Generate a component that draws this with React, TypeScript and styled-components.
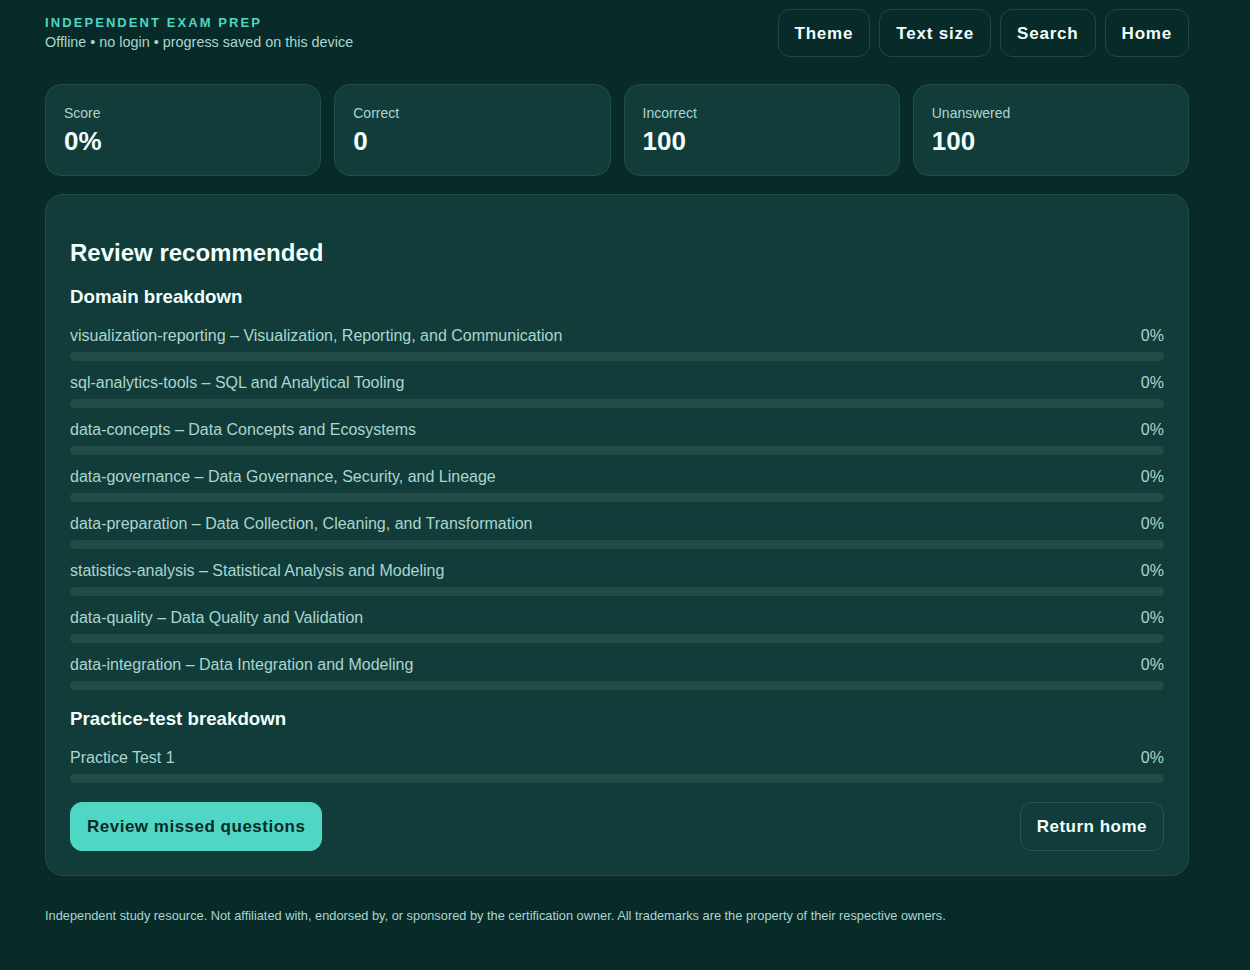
import React from 'react';
import styled, { createGlobalStyle } from 'styled-components';

const GlobalStyle = createGlobalStyle`
    * { box-sizing: border-box; }
    body {
        margin: 0;
        background: #082a29;
        font-family: "Liberation Sans", Arial, sans-serif;
        color: #eafaf7;
    }
`;

const Page = styled.div`
    width: 1144px;
    margin-left: 45px;
    min-height: 970px;
`;

const Header = styled.header`
    display: flex;
    align-items: center;
    justify-content: space-between;
    padding-top: 9px;
`;

const Brand = styled.div`
    display: flex;
    flex-direction: column;
    gap: 3px;
    margin-top: -1px;
`;

const Kicker = styled.div`
    font-size: 13px;
    line-height: 16px;
    font-weight: 700;
    letter-spacing: 0.16em;
    color: #4fd6c4;
`;

const Tagline = styled.div`
    font-size: 14.4px;
    line-height: 17px;
    color: #a9d6cf;
`;

const Nav = styled.nav`
    display: flex;
    gap: 9px;
`;

const NavButton = styled.button`
    height: 48px;
    padding: 2px 16px 0;
    border-radius: 12px;
    border: 1px solid #1f4845;
    background: transparent;
    color: #f1fffd;
    font-family: inherit;
    font-size: 17px;
    font-weight: 700;
    letter-spacing: 0.8px;
    cursor: pointer;
`;

const Stats = styled.section`
    display: grid;
    grid-template-columns: repeat(4, 1fr);
    gap: 13px;
    margin-top: 27px;
`;

const StatCard = styled.div`
    background: #123c39;
    border: 1px solid #224e4a;
    border-radius: 16px;
    padding: 20px 18px 19px;
`;

const StatLabel = styled.div`
    font-size: 14px;
    line-height: 17px;
    color: #a9d6cf;
    margin-bottom: 4px;
`;

const StatValue = styled.div`
    font-size: 26px;
    line-height: 30px;
    font-weight: 700;
    color: #f1fffd;
`;

const Panel = styled.section`
    margin-top: 18px;
    background: #123c39;
    border: 1px solid #224e4a;
    border-radius: 18px;
    padding: 43px 24px 24px;
    display: flex;
    flex-direction: column;
    gap: 18px;
`;

const Title = styled.h2`
    margin: 0 0 1px;
    font-size: 24px;
    line-height: 29px;
    font-weight: 700;
    color: #f1fffd;
`;

const SectionTitle = styled.h3`
    margin: 0;
    font-size: 18.72px;
    line-height: 22px;
    font-weight: 700;
    color: #f1fffd;
`;

const RowList = styled.div`
    display: flex;
    flex-direction: column;
    gap: 12px;
`;

const Row = styled.div`
    display: flex;
    flex-direction: column;
    gap: 7px;
`;

const RowHead = styled.div`
    display: flex;
    justify-content: space-between;
    font-size: 16px;
    line-height: 19px;
    color: #a9d6cf;
`;

const Track = styled.div`
    height: 9px;
    border-radius: 999px;
    background: #234b47;
    overflow: hidden;
`;

const Fill = styled.div`
    height: 100%;
    background: #4fd6c4;
`;

const Actions = styled.div`
    display: flex;
    justify-content: space-between;
    margin-top: 1px;
`;

const ActionButton = styled.button<{ $primary?: boolean }>`
    height: 49px;
    padding: 0 16px;
    border-radius: 12px;
    font-family: inherit;
    font-size: 17px;
    font-weight: 700;
    letter-spacing: 0.5px;
    cursor: pointer;
    border: 1px solid ${p => (p.$primary ? '#4fd6c4' : '#275450')};
    background: ${p => (p.$primary ? '#4fd6c4' : 'transparent')};
    color: ${p => (p.$primary ? '#0a2a27' : '#f1fffd')};
`;

const Footer = styled.footer`
    margin-top: 32px;
    font-size: 12.8px;
    line-height: 15px;
    color: #a9d6cf;
`;

type Breakdown = { label: string; pct: number };

const domains: Breakdown[] = [
    { label: 'visualization-reporting – Visualization, Reporting, and Communication', pct: 0 },
    { label: 'sql-analytics-tools – SQL and Analytical Tooling', pct: 0 },
    { label: 'data-concepts – Data Concepts and Ecosystems', pct: 0 },
    { label: 'data-governance – Data Governance, Security, and Lineage', pct: 0 },
    { label: 'data-preparation – Data Collection, Cleaning, and Transformation', pct: 0 },
    { label: 'statistics-analysis – Statistical Analysis and Modeling', pct: 0 },
    { label: 'data-quality – Data Quality and Validation', pct: 0 },
    { label: 'data-integration – Data Integration and Modeling', pct: 0 },
];

const tests: Breakdown[] = [{ label: 'Practice Test 1', pct: 0 }];

const stats = [
    { label: 'Score', value: '0%' },
    { label: 'Correct', value: '0' },
    { label: 'Incorrect', value: '100' },
    { label: 'Unanswered', value: '100' },
];

function BreakdownList({ items }: { items: Breakdown[] }) {
    return (
        <RowList>
            {items.map(item => (
                <Row key={item.label}>
                    <RowHead>
                        <span>{item.label}</span>
                        <span>{item.pct}%</span>
                    </RowHead>
                    <Track>
                        <Fill style={{ width: `${item.pct}%` }} />
                    </Track>
                </Row>
            ))}
        </RowList>
    );
}

export default function App() {
    return (
        <>
            <GlobalStyle />
            <Page>
                <Header>
                    <Brand>
                        <Kicker>INDEPENDENT EXAM PREP</Kicker>
                        <Tagline>Offline • no login • progress saved on this device</Tagline>
                    </Brand>
                    <Nav>
                        <NavButton>Theme</NavButton>
                        <NavButton>Text size</NavButton>
                        <NavButton>Search</NavButton>
                        <NavButton>Home</NavButton>
                    </Nav>
                </Header>

                <Stats>
                    {stats.map(s => (
                        <StatCard key={s.label}>
                            <StatLabel>{s.label}</StatLabel>
                            <StatValue>{s.value}</StatValue>
                        </StatCard>
                    ))}
                </Stats>

                <Panel>
                    <Title>Review recommended</Title>
                    <SectionTitle>Domain breakdown</SectionTitle>
                    <BreakdownList items={domains} />
                    <SectionTitle>Practice-test breakdown</SectionTitle>
                    <BreakdownList items={tests} />
                    <Actions>
                        <ActionButton $primary>Review missed questions</ActionButton>
                        <ActionButton>Return home</ActionButton>
                    </Actions>
                </Panel>

                <Footer>
                    Independent study resource. Not affiliated with, endorsed by, or sponsored by the
                    certification owner. All trademarks are the property of their respective owners.
                </Footer>
            </Page>
        </>
    );
}
